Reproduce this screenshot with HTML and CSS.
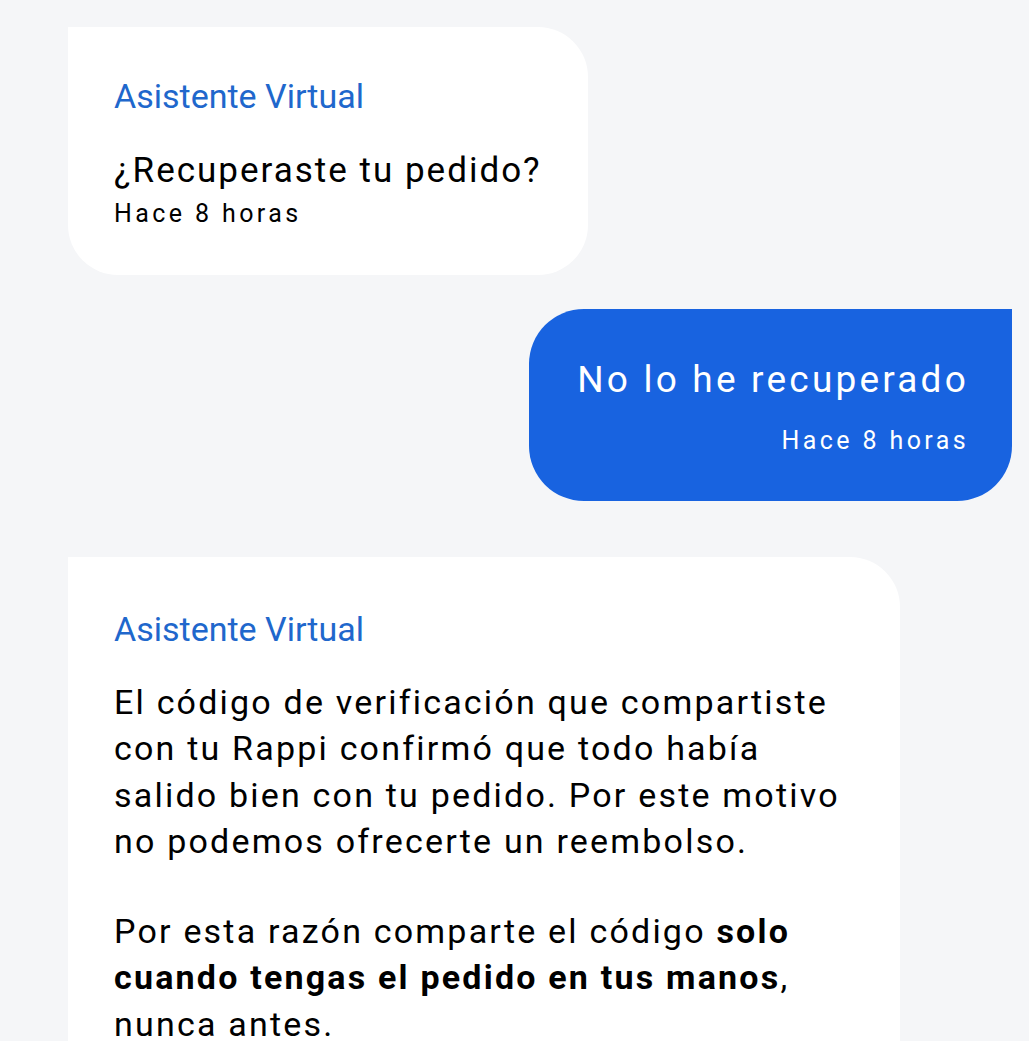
FILE: index.html
```html
<!DOCTYPE html>
<html lang="es">
<head>
<meta charset="utf-8">
<title>Chat</title>
<link rel="stylesheet" href="styles.css">
</head>
<body>
<main class="chat">
  <div class="bubble bubble-in bubble-short">
    <div class="sender">Asistente Virtual</div>
    <p class="text">¿Recuperaste tu pedido?</p>
    <div class="time">Hace 8 horas</div>
  </div>
  <div class="bubble bubble-out">
    <p class="text text-out">No lo he recuperado</p>
    <div class="time time-out">Hace 8 horas</div>
  </div>
  <div class="bubble bubble-in bubble-long">
    <div class="sender">Asistente Virtual</div>
    <p class="body">El código de verificación que compartiste con tu Rappi confirmó que todo había salido bien con tu pedido. Por este motivo no podemos ofrecerte un reembolso.</p>
    <p class="body body-gap">Por esta razón comparte el código <strong>solo cuando tengas el pedido en tus manos</strong>, nunca antes.</p>
  </div>
</main>
</body>
</html>
```
FILE: styles.css
```css
html, body {
  margin: 0;
  padding: 0;
  background: #f5f6f8;
}
body {
  font-family: Roboto, "Noto Sans", sans-serif;
  color: #000;
  overflow: hidden;
}
.chat {
  display: flex;
  flex-direction: column;
  align-items: flex-start;
  padding: 27px 17px 0 68px;
}
.bubble {
  box-sizing: border-box;
  background: #ffffff;
}
.bubble-in {
  border-radius: 0 50px 50px 50px;
}
.bubble-short {
  padding: 50px 46px 46px 46px;
}
.sender {
  font-size: 34px;
  line-height: 38px;
  color: #2067cc;
}
.text {
  margin: 36px 0 0 0;
  font-size: 35px;
  line-height: 40px;
  letter-spacing: 2px;
}
.time {
  margin-top: 8px;
  font-size: 25px;
  line-height: 30px;
  letter-spacing: 3.4px;
}
.bubble-out {
  align-self: flex-end;
  margin-top: 34px;
  width: 483px;
  padding: 50px 46px 45px 46px;
  background: #1863e0;
  color: #ffffff;
  border-radius: 55px 0 55px 55px;
  text-align: right;
}
.text-out {
  margin: 0 -3px 0 0;
  font-size: 37px;
  line-height: 42px;
  letter-spacing: 3.2px;
}
.time-out {
  margin-top: 25px;
  margin-right: -3px;
}
.bubble-long {
  margin-top: 56px;
  width: 832px;
  padding: 53px 46px 60px 46px;
}
.body {
  margin: 31px 0 0 0;
  font-size: 34px;
  line-height: 46.3px;
  letter-spacing: 2.2px;
}
.body-gap {
  margin-top: 44px;
}
.body strong {
  font-weight: 700;
}
```
